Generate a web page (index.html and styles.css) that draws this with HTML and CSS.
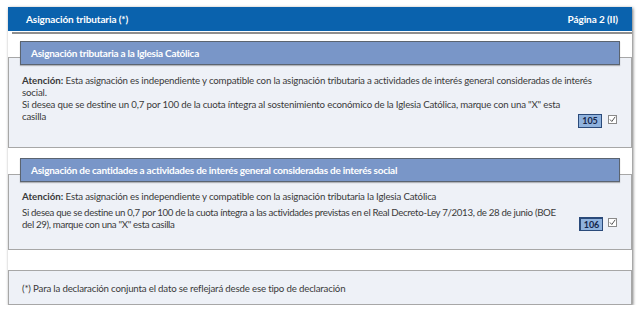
FILE: index.html
```html
<!DOCTYPE html>
<html lang="es">
<head>
<meta charset="utf-8">
<link rel="stylesheet" href="styles.css">
</head>
<body>
<div class="window">
  <div class="topbar">
    <span class="topbar-title">Asignación tributaria (*)</span>
    <span class="topbar-page">Página 2 (II)</span>
  </div>
  <div class="rule"></div>

  <div class="section">
    <div class="section-head">Asignación tributaria a la Iglesia Católica</div>
    <div class="section-box box1">
      <p class="para"><b>Atención:</b> Esta asignación es independiente y compatible con la asignación tributaria a actividades de interés general consideradas de interés social.</p>
      <div class="para row">
        <span class="row-text">Si desea que se destine un 0,7 por 100 de la cuota íntegra al sostenimiento económico de la Iglesia Católica, marque con una "X" esta casilla</span>
        <span class="field">105</span>
        <svg class="check" width="9" height="9" viewBox="0 0 9 9"><rect x="0.5" y="0.5" width="8" height="8" fill="#fff" stroke="#8a8a8a"/><polyline points="2,4.5 3.8,6.5 7.2,1.8" fill="none" stroke="#555" stroke-width="1"/></svg>
      </div>
    </div>
  </div>

  <div class="section second">
    <div class="section-head">Asignación de cantidades a actividades de interés general consideradas de interés social</div>
    <div class="section-box box2">
      <p class="para"><b>Atención:</b> Esta asignación es independiente y compatible con la asignación tributaria la Iglesia Católica</p>
      <div class="para row">
        <span class="row-text">Si desea que se destine un 0,7 por 100 de la cuota íntegra a las actividades previstas en el Real Decreto-Ley 7/2013, de 28 de junio (BOE del 29), marque con una "X" esta casilla</span>
        <span class="field field2">106</span>
        <svg class="check" width="9" height="9" viewBox="0 0 9 9"><rect x="0.5" y="0.5" width="8" height="8" fill="#fff" stroke="#8a8a8a"/><polyline points="2,4.5 3.8,6.5 7.2,1.8" fill="none" stroke="#555" stroke-width="1"/></svg>
      </div>
    </div>
  </div>

  <div class="footer">(*) Para la declaración conjunta el dato se reflejará desde ese tipo de declaración</div>
</div>
</body>
</html>
```

FILE: styles.css
```css
* { box-sizing: border-box; }
html, body { margin: 0; padding: 0; background: #fff; }
body {
  font-family: "Lato", "Open Sans", sans-serif;
  font-size: 9.7px;
  letter-spacing: -0.18px;
  color: #3a3a3a;
}
b { letter-spacing: 0; }
.window {
  margin: 7px 7px 0 8px;
  width: 624px;
  background: #fff;
  box-shadow: 1px 1px 3px rgba(0,0,0,0.55);
}
.topbar {
  height: 24px;
  background: #0a62ad;
  color: #fff;
  font-size: 10px;
  font-weight: bold;
  letter-spacing: -0.1px;
  display: flex;
  align-items: center;
  justify-content: space-between;
  padding: 0 14px 0 18px;
}
.rule {
  height: 2px;
  margin: 1px 0 0 4px;
  background: #8f8f8f;
}
.section { margin-top: 7px; }
.section.second { margin-top: 10px; }
.section-head {
  position: relative;
  z-index: 1;
  margin: 0 12px;
  height: 24px;
  background: #7996c8;
  border: 1px solid #5b6470;
  color: #fff;
  font-size: 10px;
  font-weight: bold;
  letter-spacing: -0.25px;
  display: flex;
  align-items: center;
  padding-left: 10px;
  box-shadow: 0 1px 1px rgba(0,0,0,0.25);
}
.section-box {
  margin-top: -8px;
  background: #eef1f7;
  border: 1px solid #a7a7a7;
  padding: 16px 14px 19px 13px;
}
.box2 { padding-top: 15px; padding-bottom: 18px; }
.para {
  margin: 0;
  line-height: 12px;
}
.box2 .para + .para { margin-top: 4px; }
.row {
  display: flex;
  align-items: flex-end;
}
.row-text { flex: 1; padding-right: 8px; }
.box1 .row-text { padding-bottom: 6px; }
.box2 .row-text { padding-bottom: 1px; padding-right: 12px; letter-spacing: -0.33px; }
.field {
  flex: none;
  width: 24px;
  height: 14px;
  background: #8fb2dd;
  border: 1px solid #2a4a7a;
  font-size: 9px;
  font-weight: bold;
  letter-spacing: 0;
  color: #15254a;
  display: flex;
  align-items: center;
  justify-content: center;
}
.field2 { border-left-width: 2px; border-top-width: 2px; }
.check { margin-left: 6px; margin-bottom: 4px; flex: none; }
.box2 .check { margin-bottom: 4px; margin-left: 5px; }
.footer {
  margin-top: 20px;
  height: 35px;
  background: #eef1f7;
  border: 1px solid #a7a7a7;
  padding: 0 13px;
  display: flex;
  align-items: center;
  line-height: 12px;
}
```
